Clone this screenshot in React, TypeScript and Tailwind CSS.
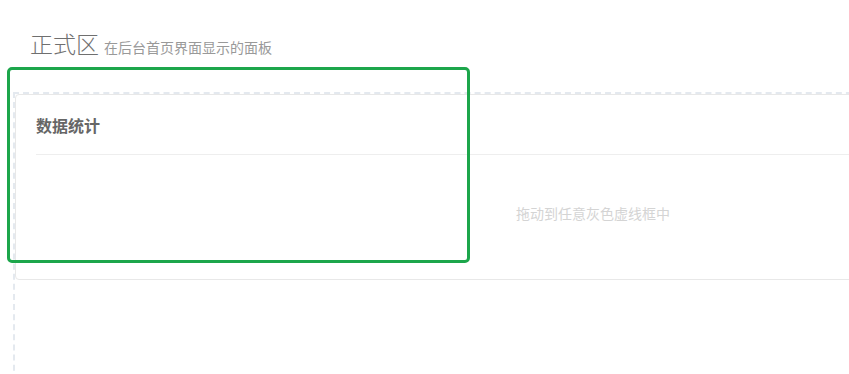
export default function App() {
  return (
    <div
      className="relative h-[374px] w-full overflow-hidden bg-white"
      style={{ fontFamily: '"Noto Sans CJK SC", "Noto Sans", sans-serif' }}
    >
      <div className="flex items-baseline gap-[5px] pl-[30px] pt-[28px]">
        <span className="text-[23px] font-light leading-[30px] text-[#6f6f6f]">正式区</span>
        <span className="text-[14px] leading-[20px] text-[#999]">在后台首页界面显示的面板</span>
      </div>
      <div className="ml-[13px] mt-[34px] h-[420px] w-[1160px] border-2 border-dashed border-[#e4e9ef]">
        <div className="rounded-[4px] border border-[#e8e8e8] bg-white">
          <div className="mx-[20px] flex h-[60px] items-center border-b border-[#eeeeee]">
            <span className="text-[16px] font-bold leading-none text-[#666]">数据统计</span>
          </div>
          <div className="flex h-[124px] items-center justify-center pb-[8px]">
            <span className="text-[14px] text-[#d4d4d4]">拖动到任意灰色虚线框中</span>
          </div>
        </div>
      </div>
      <div className="pointer-events-none absolute left-[7px] top-[67px] h-[196px] w-[463px] rounded-[5px] border-[3px] border-[#1ca64b]" />
    </div>
  );
}
